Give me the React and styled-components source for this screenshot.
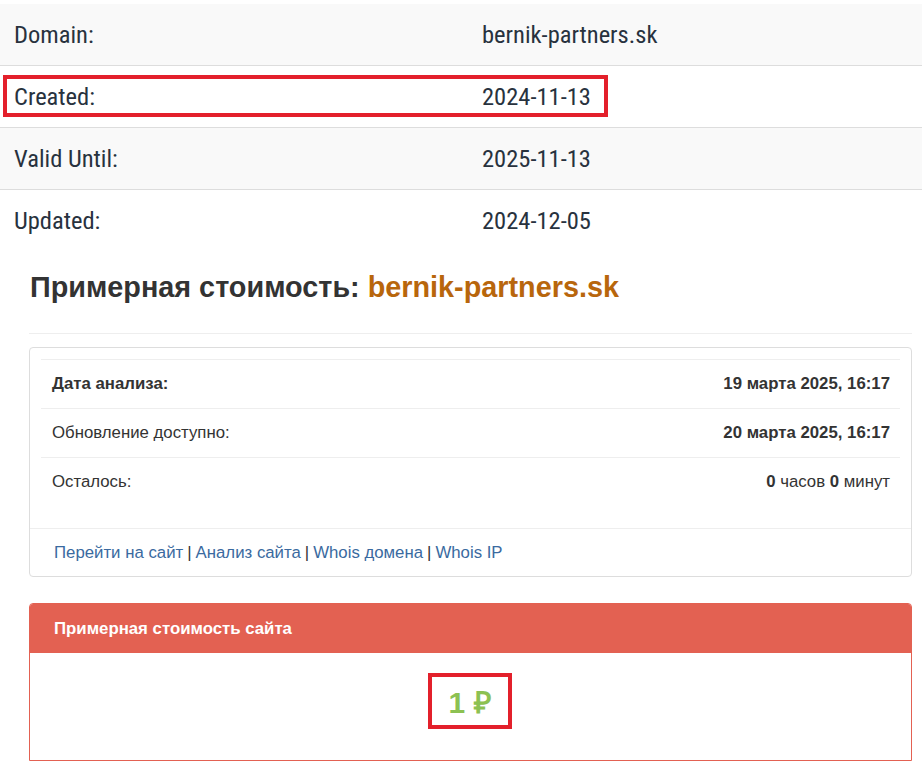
import React from "react";
import styled, { createGlobalStyle } from "styled-components";

const Global = createGlobalStyle`
  html, body { margin: 0; padding: 0; background: #fff; }
  body { font-family: "Liberation Sans", Arial, sans-serif; color: #333; }
`;

const Page = styled.div`
  width: 922px;
  padding-top: 4px;
`;

const WhoisTable = styled.div`
  display: flex;
  flex-direction: column;
  font-family: "Roboto Condensed", "Liberation Sans Narrow", Roboto, sans-serif;
  font-size: 24.5px;
  color: #28323e;
`;

const WhoisRow = styled.div`
  position: relative;
  display: grid;
  grid-template-columns: 468px 1fr;
  align-items: center;
  height: 61px;
  padding-left: 14px;
  background: ${(p) => (p.$striped ? "#f9f9f9" : "#fff")};
  border-top: ${(p) => (p.$first ? "none" : "1px solid #dddddd")};
`;

const Highlight = styled.div`
  position: absolute;
  border: 4px solid #e3202b;
  box-sizing: border-box;
  pointer-events: none;
`;

const RowHighlight = styled(Highlight)`
  left: 3px;
  top: 9px;
  width: 605px;
  height: 42px;
`;

const Section = styled.div`
  padding: 0 10px 0 29px;
`;

const Heading = styled.h2`
  margin: 0;
  padding: 19px 0 0 1px;
  height: 62px;
  box-sizing: border-box;
  font-family: "Liberation Sans", Arial, sans-serif;
  font-size: 28.8px;
  font-weight: bold;
  line-height: 34px;
  color: #333;
`;

const Domain = styled.span`
  color: #b8660c;
`;

const Rule = styled.hr`
  margin: 20px 0 13px;
  border: 0;
  border-top: 1px solid #eeeeee;
`;

const Panel = styled.div`
  border: 1px solid #dddddd;
  border-radius: 4px;
  background: #fff;
`;

const PanelBody = styled.div`
  padding: 11px 11px 22px 11px;
`;

const InfoRow = styled.div`
  display: flex;
  justify-content: space-between;
  align-items: center;
  height: 48px;
  padding: 0 10px 0 11px;
  border-top: 1px solid #eeeeee;
  font-size: 16.8px;
  color: #333;
  font-weight: ${(p) => (p.$bold ? "bold" : "normal")};
`;

const Strong = styled.b`
  font-weight: bold;
`;

const PanelFooter = styled.div`
  border-top: 1px solid #eeeeee;
  height: 47px;
  display: flex;
  align-items: center;
  padding-left: 24px;
  font-size: 16.8px;
  color: #333;
`;

const Link = styled.a`
  color: #3a6aa0;
  text-decoration: none;
`;

const Sep = styled.span`
  margin: 0 4px;
`;

const PricePanel = styled.div`
  margin-top: 26px;
  border: 1px solid #e36152;
  border-radius: 4px 4px 0 0;
  overflow: hidden;
`;

const PriceHeader = styled.div`
  background: #e36152;
  color: #fff;
  font-weight: bold;
  font-size: 16.8px;
  height: 49px;
  display: flex;
  align-items: center;
  padding-left: 24px;
`;

const PriceBody = styled.div`
  height: 107px;
  display: flex;
  justify-content: center;
  align-items: flex-start;
  padding-top: 20px;
  box-sizing: border-box;
`;

const PriceBox = styled.div`
  border: 4px solid #e3202b;
  width: 84px;
  height: 56px;
  box-sizing: border-box;
  display: flex;
  align-items: center;
  justify-content: center;
  margin-left: -2px;
`;

const Price = styled.span`
  color: #8cc152;
  font-size: 30px;
  font-weight: bold;
  font-family: "Liberation Sans", Arial, sans-serif;
`;

const whois = [
  ["Domain:", "bernik-partners.sk"],
  ["Created:", "2024-11-13"],
  ["Valid Until:", "2025-11-13"],
  ["Updated:", "2024-12-05"],
];

export default function App() {
  return (
    <Page>
      <Global />
      <WhoisTable>
        {whois.map(([k, v], i) => (
          <WhoisRow key={k} $striped={i % 2 === 0} $first={i === 0}>
            <span>{k}</span>
            <span>{v}</span>
            {i === 1 && <RowHighlight />}
          </WhoisRow>
        ))}
      </WhoisTable>
      <Section>
        <Heading>
          Примерная стоимость: <Domain>bernik-partners.sk</Domain>
        </Heading>
        <Rule />
        <Panel>
          <PanelBody>
            <InfoRow $bold>
              <span>Дата анализа:</span>
              <span>19 марта 2025, 16:17</span>
            </InfoRow>
            <InfoRow>
              <span>Обновление доступно:</span>
              <Strong>20 марта 2025, 16:17</Strong>
            </InfoRow>
            <InfoRow>
              <span>Осталось:</span>
              <span>
                <Strong>0</Strong> часов <Strong>0</Strong> минут
              </span>
            </InfoRow>
          </PanelBody>
          <PanelFooter>
            <Link href="#">Перейти на сайт</Link>
            <Sep>|</Sep>
            <Link href="#">Анализ сайта</Link>
            <Sep>|</Sep>
            <Link href="#">Whois домена</Link>
            <Sep>|</Sep>
            <Link href="#">Whois IP</Link>
          </PanelFooter>
        </Panel>
        <PricePanel>
          <PriceHeader>Примерная стоимость сайта</PriceHeader>
          <PriceBody>
            <PriceBox>
              <Price>1 ₽</Price>
            </PriceBox>
          </PriceBody>
        </PricePanel>
      </Section>
    </Page>
  );
}
